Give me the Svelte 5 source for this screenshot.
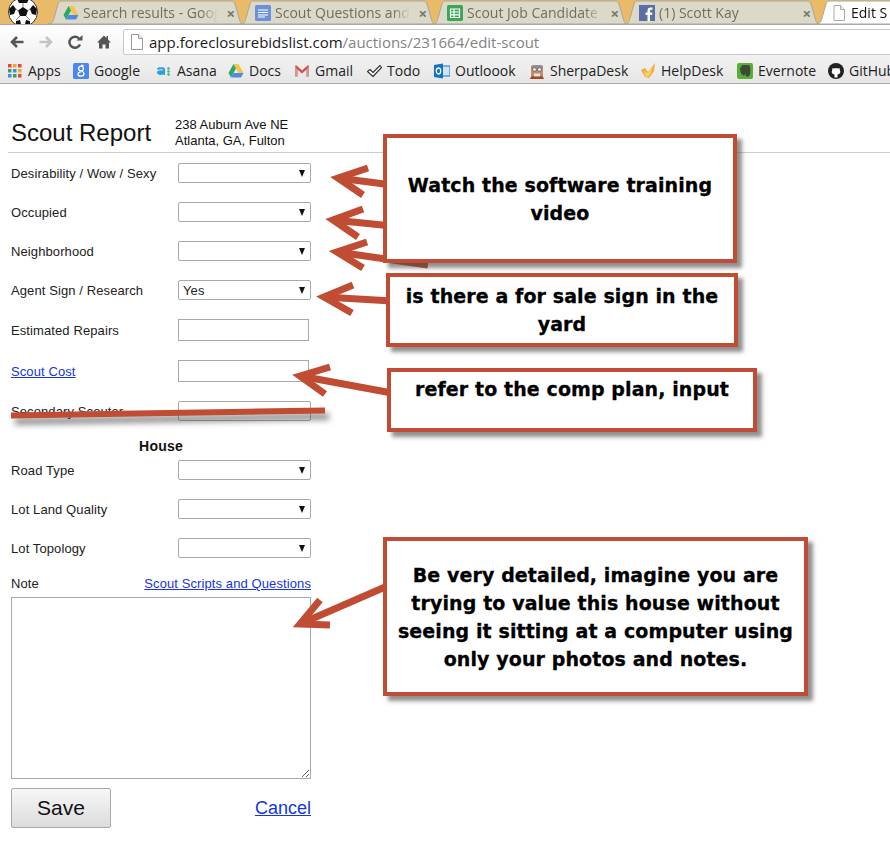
<script>
  const tabs = [
    { title: "Search results - Goog", icon: "drive" },
    { title: "Scout Questions and", icon: "docs" },
    { title: "Scout Job Candidate", icon: "sheets" },
    { title: "(1) Scott Kay", icon: "fb" },
    { title: "Edit S", icon: "page", active: true },
  ];

  // slot width follows where each bookmark falls on the bar
  const bookmarks = [
    { name: "Apps", icon: "apps", w: 66 },
    { name: "Google", icon: "google", w: 83 },
    { name: "Asana", icon: "asana", w: 72 },
    { name: "Docs", icon: "drive", w: 66 },
    { name: "Gmail", icon: "gmail", w: 72 },
    { name: "Todo", icon: "todo", w: 68 },
    { name: "Outloook", icon: "outlook", w: 95 },
    { name: "SherpaDesk", icon: "sherpa", w: 111 },
    { name: "HelpDesk", icon: "helpdesk", w: 97 },
    { name: "Evernote", icon: "evernote", w: 91 },
    { name: "GitHub", icon: "github", w: 70 },
  ];

  const topRows = [
    { label: "Desirability / Wow / Sexy", type: "select" },
    { label: "Occupied", type: "select" },
    { label: "Neighborhood", type: "select" },
    { label: "Agent Sign / Research", type: "select", value: "Yes" },
    { label: "Estimated Repairs", type: "input" },
    { label: "Scout Cost", type: "input", link: true },
    { label: "Secondary Scouter", type: "select", noArrow: true },
  ];

  const houseRows = ["Road Type", "Lot Land Quality", "Lot Topology"];

  // callouts and arrows drawn on top of the screenshot
  const callouts = [
    { x: 383, y: 134, w: 354, h: 129, text: "Watch the software training\nvideo" },
    { x: 386, y: 273, w: 352, h: 74, text: "is there a for sale sign in the\nyard" },
    { x: 387, y: 368, w: 370, h: 64, text: "refer to the comp plan, input", top: true },
    { x: 383, y: 537, w: 425, h: 159, text: "Be very detailed, imagine you are\ntrying to value this house without\nseeing it sitting at a computer using\nonly your photos and notes." },
  ];

  const arrows = [
    { shaft: "338,178 392,185", head: "368,168 338,178 363,195" },
    { shaft: "333,220 392,226", head: "363,209 333,220 358,237" },
    { shaft: "337,252 428,265", head: "367,242 337,252 363,268" },
    { shaft: "324,297 392,301", head: "353,285 324,297 352,313" },
    { shaft: "300,376 392,393", head: "330,367 300,376 325,394" },
    { shaft: "300,624 392,584", head: "320,600 300,624 330,625" },
  ];
</script>

{#snippet icon(name)}
  <svg class="ico" viewBox="0 0 16 16" width="16" height="16">
    {#if name === "drive"}
      <path d="M5.5 1h5l5 9h-5z" fill="#f6c544" />
      <path d="M5.5 1L.5 10 3 14.5l5-9z" fill="#2ea869" />
      <path d="M3 14.5h10l2.5-4.5h-10z" fill="#4d8ae6" />
    {:else if name === "docs"}
      <rect x="0" y="0" width="16" height="16" rx="1.5" fill="#6b92d9" />
      <path d="M3 5h10M3 7.5h10M3 10h10M3 12h7" stroke="#fff" stroke-width="1.2" />
    {:else if name === "sheets"}
      <rect x="0" y="0" width="16" height="16" rx="1.5" fill="#3aa757" />
      <path d="M3.5 4h9v8.5h-9zM3.500 7h9M3.500 9.800h9M7 4v8.500" fill="none" stroke="#fff" stroke-width="1.200" />
    {:else if name === "fb"}
      <rect x="0" y="0" width="16" height="16" fill="#5a6fa3" />
      <path d="M11 16v-6h2l.4-2.500H11V6c0-.8.300-1.200 1.200-1.200h1.300V2.500C13 2.400 12.300 2.400 11.600 2.400 9.700 2.400 8.500 3.500 8.500 5.600v1.900H6.500V10h2v6z" fill="#fff" />
    {:else if name === "page"}
      <path d="M3 .5h6.500L13.500 4.500v11h-10.500z" fill="#fff" stroke="#a8a8a8" />
      <path d="M9.500 .5v4h4" fill="#eee" stroke="#a8a8a8" />
    {:else if name === "apps"}
      {#each [0, 5, 10] as gy, r}
        {#each [1, 6, 11] as gx, c}
          <rect x={gx} y={gy + 1} width="3.500" height="3.500" fill={["#e2493b", "#f0a92e", "#e2493b", "#3c9d5c", "#4a86e8", "#f0a92e", "#4a86e8", "#3c9d5c", "#e2493b"][r * 3 + c]} />
        {/each}
      {/each}
    {:else if name === "google"}
      <rect x="0" y="0" width="16" height="16" rx="1.500" fill="#4d86ef" />
      <circle cx="8" cy="5.500" r="2.400" fill="none" stroke="#fff" stroke-width="1.300" />
      <path d="M10.500 2.500H8M8.500 8c2 1 2.500 2 2.500 2.800 0 1.500-1.500 2.400-3 2.400s-3-.7-3-2.200C5 9.800 6 9 8 8.800" fill="none" stroke="#fff" stroke-width="1.300" />
    {:else if name === "asana"}
      <path d="M1 5.500c1-1.500 7-2 8 .3V12H7.500v-.7C5 12.500 1 12 1 9.500 1 7.500 4 6.800 7.500 7.500 7 5.500 3.500 6 2 7z" fill="#2d9fd8" />
      <circle cx="12.500" cy="5.500" r="1.200" fill="#34b27b" />
      <circle cx="12.500" cy="8.500" r="1.200" fill="#34b27b" />
      <circle cx="12.500" cy="11.500" r="1.200" fill="#34b27b" />
    {:else if name === "gmail"}
      <path d="M1 2.500v11h2.500V6.500L8 10.500l4.500-4v7H15v-11h-1.500L8 7.500 2.500 2.500z" fill="#d9493d" />
      <path d="M3.500 6.500v7H1v-11zM12.500 6.500v7H15v-11z" fill="#bdbdbd" opacity=".7" />
    {:else if name === "todo"}
      <path d="M1.500 8.500l2.500-2 3 3L14 2.500l1.500 2L7 13.500z" fill="#fff" stroke="#333" stroke-width="1.100" stroke-linejoin="round" />
    {:else if name === "outlook"}
      <rect x="6" y="3" width="10" height="10" fill="#cfe3f6" stroke="#1d70b8" />
      <path d="M0 2l9-1.500v15L0 14z" fill="#1273c4" />
      <ellipse cx="4.500" cy="8" rx="2.200" ry="3" fill="none" stroke="#fff" stroke-width="1.300" />
    {:else if name === "sherpa"}
      <rect x="2" y="2" width="12" height="14" rx="2" fill="#c88a6a" />
      <path d="M2 5c0-4 12-4 12 0z" fill="#8b8f95" />
      <circle cx="5.500" cy="6.500" r="2" fill="#dfe6ea" stroke="#555" stroke-width=".7" />
      <circle cx="10.500" cy="6.500" r="2" fill="#dfe6ea" stroke="#555" stroke-width=".7" />
      <path d="M1 16c1-5 13-5 14 0z" fill="#a3462f" />
      <path d="M5 10.500h6v3H5z" fill="#e9e2d6" />
    {:else if name === "helpdesk"}
      <path d="M1 7l4-2 3 4L15 0 14 8l-5 7-4-1z" fill="#f2a93a" />
      <path d="M4 7l3 3 6-7-2 7-3 4-3-1z" fill="#f8cf6d" />
    {:else if name === "evernote"}
      <rect x="0" y="0" width="16" height="16" rx="2" fill="#5bae35" />
      <path d="M3 5l2.500-3h5.500c1.500 0 2 1 2.200 3 .3 2.500.3 5.500-.7 7.500-.5 1-2.500 1.200-3.500.7-.8-.5-.6-2 .5-2.200-1 0-2 .5-2 1.500-2 0-4-1-4.500-7.500z" fill="#3c4a3a" />
    {:else if name === "github"}
      <circle cx="8" cy="8" r="8" fill="#222" />
      <path d="M4.500 5l1.300.6c1.400-.5 3-.5 4.400 0L11.500 5c.3.900.3 1.500.2 2 .6.700.7 1.500.5 2.500-.4 1.300-1.500 1.900-2.700 2v3H6.500v-3c-1.200-.1-2.300-.7-2.700-2-.2-1 0-1.800.5-2.500-.1-.5-.1-1.100.2-2z" fill="#fff" />
    {/if}
  </svg>
{/snippet}

<div class="screen">
  <div class="tabstrip">
    <svg class="ball" viewBox="0 0 30 30" width="30" height="30">
      <circle cx="15" cy="15" r="14.500" fill="#fff" stroke="#333" />
      <path d="M15 10l5 3.500-2 5.500h-6l-2-5.500z" fill="#111" />
      <path d="M9 2L15 1l6 1-2 4h-8zM1 12l4-4 3 4-2 5-4 1zM29 12l-4-4-3 4 2 5 4 1zM8 24l4-1 1 4-1 2-4-2zM22 24l-4-1-1 4 1 2 4-2z" fill="#111" />
      <path d="M15 10V6M10 13.500l-2-1.500M20 13.500l2-1.500M12 19l-4 4M18 19l4 4" stroke="#555" stroke-width=".7" />
    </svg>
    {#each tabs as tab}
      <div class="tab" class:active={tab.active}>
        <svg class="tabshape" viewBox="0 0 197 24" width="197" height="24">
          <path d="M0 24C4 24 5 22 6 18L10 4C11 1 12 1 15 1H182C185 1 186 1 187 4L191 18C192 22 193 24 197 24Z" />
        </svg>
        {@render icon(tab.icon)}
        <span class="tabtitle">{tab.title}</span>
        {#if !tab.active}<span class="close">×</span>{/if}
      </div>
    {/each}
  </div>

  <div class="toolbar">
    <svg class="nav" viewBox="0 0 16 16" width="16" height="16">
      <path d="M14.500 8H4M8 3L3 8l5 5" fill="none" stroke="#555" stroke-width="2.600" />
    </svg>
    <svg class="nav" viewBox="0 0 16 16" width="16" height="16">
      <path d="M1.500 8H12M8 3l5 5-5 5" fill="none" stroke="#c4c4c4" stroke-width="2.600" />
    </svg>
    <svg class="nav" viewBox="0 0 16 16" width="16" height="16">
      <path d="M13 10.500A5.500 5.500 0 1 1 12 4.500" fill="none" stroke="#555" stroke-width="2.500" />
      <path d="M9.500 6.500h6V1z" fill="#555" />
    </svg>
    <svg class="nav" viewBox="0 0 16 16" width="16" height="16">
      <path d="M8 1.500L1 8.500h2v6h3.500v-4h3v4H13v-6h2l-3-3V2h-1.500v2z" fill="#555" />
    </svg>
    <div class="omnibox">
      <svg viewBox="0 0 12 16" width="12" height="16">
        <path d="M.5.500h7l4 4v11H.5z" fill="#fff" stroke="#999" />
        <path d="M7.500.500v4h4" fill="#eee" stroke="#999" />
      </svg>
      <span class="url"><span class="host">app.foreclosurebidslist.com</span>/auctions/231664/edit-scout</span>
    </div>
  </div>

  <div class="bookmarks">
    {#each bookmarks as b}
      <span class="bookmark" style="width:{b.w}px">{@render icon(b.icon)}<span>{b.name}</span></span>
    {/each}
  </div>

  <main class="page">
    <header class="head">
      <h1>Scout Report</h1>
      <div class="address">238 Auburn Ave NE<br />Atlanta, GA, Fulton</div>
    </header>

    <form class="form">
      {#each topRows as row}
        <div class="row">
          {#if row.link}
            <a class="label" href="#cost">{row.label}</a>
          {:else}
            <span class="label">{row.label}</span>
          {/if}
          {#if row.type === "select"}
            <div class="select" class:plain={row.noArrow}>
              <select>
                <option>{row.value || ""}</option>
              </select>
            </div>
          {:else}
            <input type="text" />
          {/if}
        </div>
      {/each}

      <div class="section">House</div>

      {#each houseRows as label}
        <div class="row">
          <span class="label">{label}</span>
          <div class="select"><select><option></option></select></div>
        </div>
      {/each}

      <div class="noterow">
        <span>Note</span>
        <a href="#scripts">Scout Scripts and Questions</a>
      </div>
      <textarea></textarea>
      <div class="actions">
        <button type="button">Save</button>
        <a href="#cancel">Cancel</a>
      </div>
    </form>
  </main>

  <svg class="marks" viewBox="0 0 890 852" width="890" height="852">
    {#each arrows as a}
      <polyline points={a.shaft} class="arrow" />
      <polyline points={a.head} class="arrow" />
    {/each}
    <line class="strike" x1="11" y1="415.500" x2="325" y2="410.500" />
  </svg>

  {#each callouts as c}
    <div
      class="callout"
      class:top={c.top}
      style="left:{c.x}px;top:{c.y}px;width:{c.w}px;height:{c.h}px"
    >{c.text}</div>
  {/each}
</div>

<style>
  :global(body) {
    margin: 0;
    background: #fff;
  }

  .screen {
    position: relative;
    width: 890px;
    height: 852px;
    overflow: hidden;
    font-family: "Liberation Sans", Arial, sans-serif;
    color: #111;
  }

  /* browser chrome */
  .tabstrip {
    display: flex;
    height: 24px;
    padding-left: 48px;
    background: #e9bb68;
    position: relative;
    overflow: hidden;
  }

  .ball {
    position: absolute;
    left: 8px;
    top: -3px;
  }

  .tab {
    position: relative;
    flex: 0 0 197px;
    box-sizing: border-box;
    width: 197px;
    height: 24px;
    margin-right: -5px;
    padding: 1px 10px 0 15px;
    display: flex;
    align-items: center;
    gap: 4px;
    font-family: "Open Sans", sans-serif;
    font-size: 14px;
    color: #6f6e62;
  }

  .tabshape {
    position: absolute;
    left: 0;
    top: 0;
  }

  .tabshape path {
    fill: #dcd9c9;
    stroke: #a9a69a;
  }

  .tab.active {
    z-index: 1;
    color: #111;
  }

  .tab.active .tabshape path {
    fill: #fff;
  }

  .tab .ico {
    position: relative;
    flex: none;
  }

  .tabtitle {
    position: relative;
    width: 142px;
    white-space: nowrap;
    -webkit-mask-image: linear-gradient(90deg, #000 85%, transparent 97%);
    mask-image: linear-gradient(90deg, #000 85%, transparent 97%);
  }

  .close {
    position: relative;
    margin-left: auto;
    font-size: 15px;
    font-weight: 700;
    color: #77766c;
  }

  .toolbar {
    height: 33px;
    box-sizing: border-box;
    border-top: 1px solid #a9a9a9;
    padding: 4px 0 2px 9px;
    display: flex;
    align-items: center;
    gap: 13px;
    background: linear-gradient(#fff, #f1f1f1);
    position: relative;
  }

  .omnibox {
    flex: 1;
    height: 26px;
    box-sizing: border-box;
    margin-left: -2px;
    margin-right: -8px;
    padding-left: 7px;
    display: flex;
    align-items: center;
    gap: 6px;
    background: #fff;
    border: 1px solid #c8c8c8;
    border-radius: 2px;
    font-family: "Open Sans", sans-serif;
    font-size: 15px;
    color: #838383;
  }

  .host {
    color: #1a1a1a;
  }

  .bookmarks {
    height: 27px;
    box-sizing: border-box;
    padding: 1px 0 0 7px;
    display: flex;
    align-items: center;
    background: linear-gradient(#f1f1f1, #e6e6e6);
    border-bottom: 1px solid #a9a9a9;
    font-family: "Open Sans", sans-serif;
    font-size: 14px;
    color: #222;
    white-space: nowrap;
    overflow: hidden;
  }

  .bookmark {
    flex: none;
    display: flex;
    align-items: center;
    gap: 5px;
  }

  .bookmark .ico {
    flex: none;
  }

  /* page */
  .page {
    font-size: 13px;
    letter-spacing: 0.1px;
    color: #222;
  }

  .head {
    margin-left: 8px;
    height: 69px;
    box-sizing: border-box;
    padding: 33px 0 3px 3px;
    display: flex;
    border-bottom: 1px solid #ccc;
  }

  h1 {
    margin: 0;
    width: 164px;
    font-size: 24px;
    font-weight: 400;
    line-height: 32px;
    letter-spacing: 0;
    color: #111;
  }

  .address {
    line-height: 16px;
    letter-spacing: 0;
    color: #111;
  }

  .form {
    width: 300px;
    padding: 10px 0 0 11px;
  }

  .row {
    display: flex;
    align-items: center;
    margin-bottom: 19px;
  }

  .label {
    width: 167px;
    flex: none;
  }

  a {
    color: #1535e0;
  }

  .select {
    position: relative;
    width: 133px;
    height: 20px;
  }

  .select::after {
    content: "";
    position: absolute;
    right: 6px;
    top: 7px;
    border-left: 3.500px solid transparent;
    border-right: 3.500px solid transparent;
    border-top: 7px solid #111;
  }

  .select.plain::after {
    display: none;
  }

  select {
    appearance: none;
    width: 100%;
    height: 100%;
    box-sizing: border-box;
    margin: 0;
    padding: 0 0 0 4px;
    background: #fff;
    border: 1px solid #a9a9a9;
    border-radius: 2px;
    font: inherit;
    letter-spacing: inherit;
    color: #222;
  }

  input {
    width: 131px;
    height: 22px;
    box-sizing: border-box;
    margin: 0;
    background: #fff;
    border: 1px solid #a9a9a9;
  }

  .section {
    height: 20px;
    line-height: 13px;
    text-align: center;
    font-size: 14px;
    font-weight: 700;
    letter-spacing: 0.2px;
    color: #111;
  }

  .noterow {
    height: 20px;
    line-height: 13px;
    display: flex;
    justify-content: space-between;
  }

  textarea {
    display: block;
    width: 300px;
    height: 182px;
    box-sizing: border-box;
    margin: 0;
    border: 1px solid #a9a9a9;
  }

  .actions {
    margin-top: 9px;
    display: flex;
    align-items: center;
    justify-content: space-between;
    letter-spacing: 0;
  }

  button {
    width: 100px;
    height: 40px;
    padding: 0;
    background: linear-gradient(#f7f7f7, #dcdcdc);
    border: 1px solid #a9a9a9;
    border-radius: 2px;
    font: inherit;
    font-size: 21px;
    color: #111;
  }

  .actions a {
    font-size: 18px;
  }

  /* annotations pasted over the page */
  .marks {
    position: absolute;
    left: 0;
    top: 0;
    pointer-events: none;
  }

  .arrow {
    fill: none;
    stroke: #bf4c33;
    stroke-width: 7;
    stroke-linejoin: miter;
    stroke-miterlimit: 6;
  }

  .strike {
    stroke: #bf4c33;
    stroke-width: 6;
    filter: drop-shadow(4px 6px 3px rgba(60, 60, 60, 0.65));
  }

  .callout {
    position: absolute;
    box-sizing: border-box;
    display: flex;
    align-items: center;
    justify-content: center;
    background: #fff;
    border: 4px solid #c04d33;
    box-shadow: 5px 5px 4px rgba(70, 70, 70, 0.6);
    font-family: "DejaVu Sans", Verdana, sans-serif;
    font-size: 19px;
    font-weight: 700;
    letter-spacing: 0.1px;
    -webkit-text-stroke: 0.3px #000;
    line-height: 28px;
    text-align: center;
    white-space: pre-line;
    color: #000;
  }

  .callout.top {
    align-items: flex-start;
    padding-top: 3px;
  }
</style>
